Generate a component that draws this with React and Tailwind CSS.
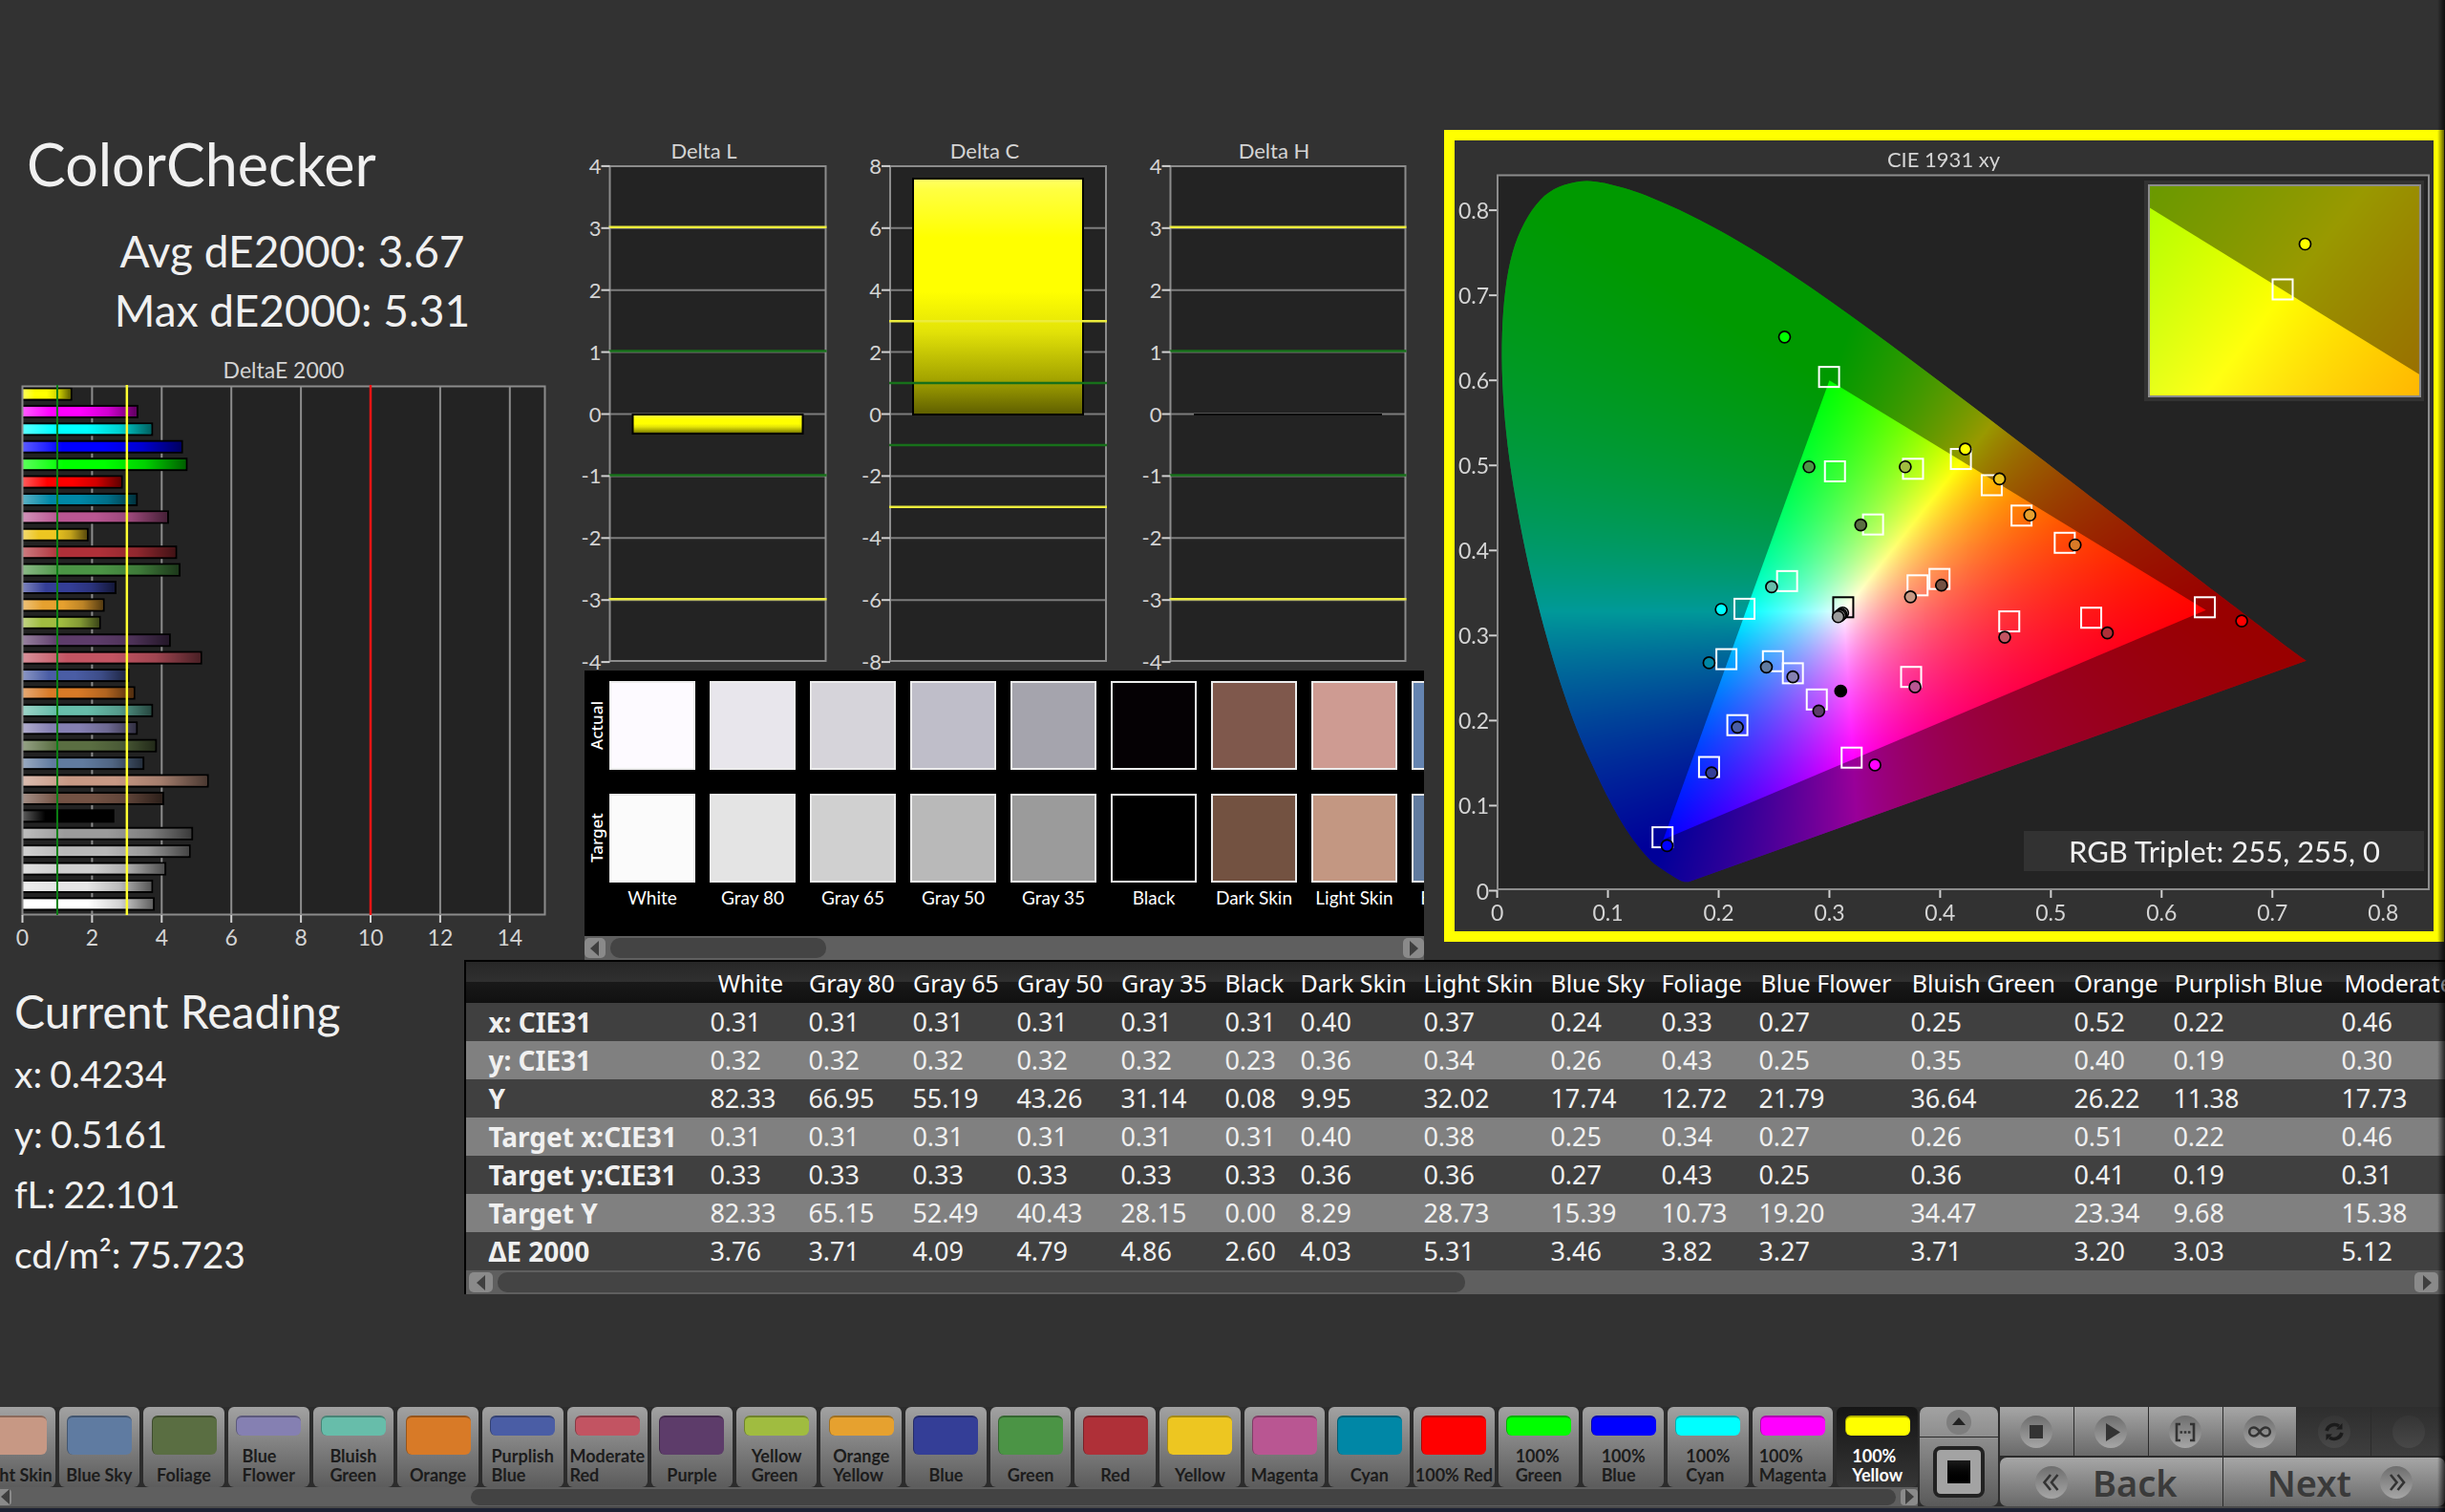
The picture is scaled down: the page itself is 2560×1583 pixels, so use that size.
import React, { useEffect, useRef } from "react";

/* ---------- data ---------- */

const DELTA_E = [
  ["#ffff00", 1.39], ["#ff00ff", 3.29], ["#00ffff", 3.71], ["#0000ff", 4.57], ["#00ff00", 4.7],
  ["#ff0000", 2.84], ["#0087a6", 3.27], ["#b95692", 4.17], ["#edc621", 1.86], ["#af3038", 4.4],
  ["#4b9445", 4.5], ["#343e97", 2.66], ["#e6a12f", 2.32], ["#a0bc40", 2.21], ["#5d3c6a", 4.22],
  ["#c25462", 5.12], ["#4a5da5", 3.03], ["#d87a27", 3.2], ["#67bdaa", 3.71], ["#8580b2", 3.27],
  ["#5a6e42", 3.82], ["#617b9f", 3.46], ["#c79884", 5.31], ["#735244", 4.03], ["#000000", 2.6],
  ["#9b9b9b", 4.86], ["#b8b8b8", 4.79], ["#cfcfcf", 4.09], ["#e5e5e5", 3.71], ["#ffffff", 3.76],
];

const SWATCHES = [
  ["White", "#fdfaff", "#fbfbfb"],
  ["Gray 80", "#e8e6ec", "#e4e4e4"],
  ["Gray 65", "#d6d4da", "#d0d0d0"],
  ["Gray 50", "#bfbec9", "#b9b9b9"],
  ["Gray 35", "#a5a4ad", "#9b9b9b"],
  ["Black", "#050104", "#000000"],
  ["Dark Skin", "#7f584c", "#735241"],
  ["Light Skin", "#ce9b92", "#c39782"],
  ["Blue Sky", "#6584b0", "#617b9f"],
];

const TARGETS = [
  [0.2997, 0.604], [0.305, 0.493], [0.3755, 0.496], [0.4187, 0.5075], [0.4466, 0.4767],
  [0.4735, 0.441], [0.5125, 0.409], [0.3394, 0.4305], [0.2618, 0.364], [0.2233, 0.3314],
  [0.3796, 0.359], [0.3994, 0.3665], [0.639, 0.3332], [0.5364, 0.3209], [0.4624, 0.3166],
  [0.207, 0.2722], [0.249, 0.2698], [0.267, 0.2556], [0.3738, 0.2513], [0.2886, 0.2248],
  [0.2169, 0.1946], [0.1913, 0.1454], [0.3201, 0.1564], [0.1493, 0.0628],
];

const READINGS = [
  [0.2595, 0.651, "#00ff00"], [0.2816, 0.4983, "#4b9445"], [0.3685, 0.4983, "#a0bc40"],
  [0.4227, 0.5192, "#ffff00"], [0.4536, 0.4841, "#edc621"], [0.481, 0.4416, "#e6a12f"],
  [0.5219, 0.4065, "#d87a27"], [0.3283, 0.4299, "#5a6e42"], [0.2478, 0.3572, "#67bdaa"],
  [0.2023, 0.3307, "#00ffff"], [0.3732, 0.3455, "#c79884"], [0.4012, 0.3591, "#735244"],
  [0.312, 0.3265, "#e5e5e5"], [0.3105, 0.325, "#cfcfcf"], [0.3095, 0.3235, "#b8b8b8"],
  [0.3079, 0.322, "#9b9b9b"], [0.6723, 0.3172, "#ff0000"], [0.551, 0.303, "#af3038"],
  [0.4583, 0.2981, "#c25462"], [0.1913, 0.2679, "#0087a6"], [0.2431, 0.263, "#617b9f"],
  [0.267, 0.2513, "#8580b2"], [0.3773, 0.2396, "#b95692"], [0.3102, 0.2347, "#000000"],
  [0.2904, 0.2113, "#5d3c6a"], [0.2169, 0.1922, "#4a5da5"], [0.1936, 0.1386, "#343e97"],
  [0.3411, 0.1478, "#ff00ff"], [0.1534, 0.053, "#0000ff"],
];

const LOCUS = [
  [0.173, 0.0105], [0.1689, 0.0105], [0.1644, 0.0125], [0.1566, 0.0187], [0.144, 0.0297], [0.1355, 0.0399],
  [0.1241, 0.0578], [0.1096, 0.0868], [0.0913, 0.1327], [0.0687, 0.2007], [0.0454, 0.295],
  [0.0235, 0.4127], [0.0082, 0.5384], [0.0045, 0.6548], [0.0139, 0.7502], [0.0389, 0.812],
  [0.0743, 0.8338], [0.1142, 0.8262], [0.1547, 0.8059], [0.1929, 0.7816], [0.2296, 0.7543],
  [0.2658, 0.7243], [0.3016, 0.6923], [0.3373, 0.6589], [0.3731, 0.6245], [0.4087, 0.5896],
  [0.4441, 0.5547], [0.4788, 0.5202], [0.5125, 0.4866], [0.5448, 0.4544], [0.5752, 0.4242],
  [0.6029, 0.3965], [0.627, 0.3725], [0.6482, 0.3514], [0.6658, 0.334], [0.6915, 0.3083],
  [0.714, 0.2859], [0.7306, 0.2704],
];

const COLUMNS = [
  ["White", "w-[103px]"], ["Gray 80", "w-[109px]"], ["Gray 65", "w-[109px]"], ["Gray 50", "w-[109px]"],
  ["Gray 35", "w-[109px]"], ["Black", "w-[79px]"], ["Dark Skin", "w-[129px]"], ["Light Skin", "w-[133px]"],
  ["Blue Sky", "w-[116px]"], ["Foliage", "w-[102px]"], ["Blue Flower", "w-[159px]"],
  ["Bluish Green", "w-[171px]"], ["Orange", "w-[104px]"], ["Purplish Blue", "w-[176px]"],
  ["Moderate Red", "w-[190px]"],
];

const ROWS = [
  ["x: CIE31", "0.31 0.31 0.31 0.31 0.31 0.31 0.40 0.37 0.24 0.33 0.27 0.25 0.52 0.22 0.46"],
  ["y: CIE31", "0.32 0.32 0.32 0.32 0.32 0.23 0.36 0.34 0.26 0.43 0.25 0.35 0.40 0.19 0.30"],
  ["Y", "82.33 66.95 55.19 43.26 31.14 0.08 9.95 32.02 17.74 12.72 21.79 36.64 26.22 11.38 17.73"],
  ["Target x:CIE31", "0.31 0.31 0.31 0.31 0.31 0.31 0.40 0.38 0.25 0.34 0.27 0.26 0.51 0.22 0.46"],
  ["Target y:CIE31", "0.33 0.33 0.33 0.33 0.33 0.33 0.36 0.36 0.27 0.43 0.25 0.36 0.41 0.19 0.31"],
  ["Target Y", "82.33 65.15 52.49 40.43 28.15 0.00 8.29 28.73 15.39 10.73 19.20 34.47 23.34 9.68 15.38"],
  ["ΔE 2000", "3.76 3.71 4.09 4.79 4.86 2.60 4.03 5.31 3.46 3.82 3.27 3.71 3.20 3.03 5.12"],
];

const PATCHES = [
  ["Light Skin", "#c79884"], ["Blue Sky", "#5f7ba1"], ["Foliage", "#5a6e42"], ["Blue\nFlower", "#8580b2"],
  ["Bluish\nGreen", "#67bdaa"], ["Orange", "#d87a27"], ["Purplish\nBlue", "#4a5da5"],
  ["Moderate\nRed", "#c25462"], ["Purple", "#5d3c6a"], ["Yellow\nGreen", "#a0bc40"],
  ["Orange\nYellow", "#e6a12f"], ["Blue", "#343e97"], ["Green", "#4b9445"], ["Red", "#af3038"],
  ["Yellow", "#edc621"], ["Magenta", "#b95692"], ["Cyan", "#0087a6"], ["100% Red", "#ff0000"],
  ["100%\nGreen", "#00ff00"], ["100%\nBlue", "#0000ff"], ["100%\nCyan", "#00ffff"],
  ["100%\nMagenta", "#ff00ff"], ["100%\nYellow", "#ffff00"],
];

/* ---------- Delta E chart ---------- */

const deX = (v) => 23.5 + v * 36.45;

function DeltaEChart() {
  return (
    <svg viewBox="0 356 612 646" className="block w-full font-['Lato',sans-serif]" role="img" aria-label="DeltaE 2000">
      <defs>
        <linearGradient id="sheenX">
          <stop offset="0" stopColor="#fff" stopOpacity="0.35" />
          <stop offset="0.25" stopColor="#fff" stopOpacity="0" />
        </linearGradient>
        <linearGradient id="shadeX">
          <stop offset="0.5" stopColor="#000" stopOpacity="0" />
          <stop offset="0.75" stopColor="#000" stopOpacity="0.18" />
          <stop offset="1" stopColor="#000" stopOpacity="0.62" />
        </linearGradient>
      </defs>
      <text x="297" y="396" textAnchor="middle" fontSize="23" fill="#d4d4d4">DeltaE 2000</text>
      <rect x="23.5" y="405" width="547" height="552" fill="#232323" />
      {[2, 4, 6, 8, 10, 12, 14].map((v) => (
        <line key={v} x1={deX(v)} x2={deX(v)} y1="405" y2="957" stroke="#8c8c8c" strokeWidth="2" />
      ))}
      {DELTA_E.map(([color, v], i) => {
        const y = 406 + i * 18.41;
        const w = v * 36.45 - 1;
        return (
          <g key={i}>
            <rect x="24" y={y - 0.5} width={w + 2} height="14" fill="#000" />
            <rect x="24" y={y + 1.5} width={w} height="10" fill={color} />
            <rect x="24" y={y + 1.5} width={w} height="10" fill="url(#shadeX)" />
            <rect x="24" y={y + 1.5} width={w} height="10" fill="url(#sheenX)" />
          </g>
        );
      })}
      <rect x="23.5" y="404.5" width="547" height="553" fill="none" stroke="#8c8c8c" strokeWidth="2" />
      <line x1={deX(1)} x2={deX(1)} y1="403" y2="958" stroke="#0c8014" strokeWidth="2" />
      <line x1={deX(3)} x2={deX(3)} y1="403" y2="958" stroke="#ffff30" strokeWidth="2.5" />
      <line x1={deX(10)} x2={deX(10)} y1="403" y2="958" stroke="#f01414" strokeWidth="2.5" />
      {[0, 2, 4, 6, 8, 10, 12, 14].map((v) => (
        <g key={v}>
          <line x1={deX(v)} x2={deX(v)} y1="958" y2="966" stroke="#d0d0d0" strokeWidth="2" />
          <text x={deX(v)} y="990" textAnchor="middle" fontSize="23" fill="#d4d4d4">{v}</text>
        </g>
      ))}
    </svg>
  );
}

/* ---------- Delta L / C / H charts ---------- */

const DELTAS = [
  { name: "Delta L", left: 638.5, width: 226, cx: 737, step: 1 },
  { name: "Delta C", left: 932, width: 226, cx: 1031, step: 2 },
  { name: "Delta H", left: 1225.5, width: 246, cx: 1334, step: 1 },
];

function DeltaCharts() {
  const y = (units) => 433.5 - units * 64.9;
  return (
    <svg viewBox="612 136 879 566" className="block w-full overflow-visible font-['Lato',sans-serif]" role="img" aria-label="Delta L, Delta C and Delta H">
      <defs>
        <linearGradient id="barY" x2="0" y2="1">
          <stop offset="0" stopColor="#ffff66" />
          <stop offset="0.05" stopColor="#ffff40" />
          <stop offset="0.25" stopColor="#ffff00" />
          <stop offset="0.48" stopColor="#ffff00" />
          <stop offset="0.65" stopColor="#e2e208" />
          <stop offset="0.85" stopColor="#a4a400" />
          <stop offset="1" stopColor="#5e5e00" />
        </linearGradient>
      </defs>
      {DELTAS.map(({ name, left, width, cx, step }) => (
        <g key={name}>
          <text x={cx} y="166" textAnchor="middle" fontSize="22" fill="#d4d4d4">{name}</text>
          <rect x={left} y="174" width={width} height="518" fill="#232323" />
          {[3, 2, 1, 0, -1, -2, -3].map((u) => (
            <line key={u} x1={left} x2={left + width} y1={y(u)} y2={y(u)} stroke="#7c7c7c" strokeWidth="2" />
          ))}
          <rect x={left} y="174" width={width} height="518" fill="none" stroke="#8c8c8c" strokeWidth="2" />
          {name === "Delta L" && (
            <rect x="662.5" y="434" width="178" height="20" fill="url(#barY)" stroke="#000" strokeWidth="2" />
          )}
          {name === "Delta C" && (
            <rect x="956" y="187" width="178" height="247" fill="url(#barY)" stroke="#000" strokeWidth="2" />
          )}
          {name === "Delta H" && <rect x="1250" y="433" width="197" height="2" fill="#0c0c0c" />}
          {[3, 1, -1, -3].map((v) => (
            <line
              key={v}
              x1={left - 1}
              x2={left + width + 1}
              y1={y(v / step) - (step === 1 ? 1 : 0)}
              y2={y(v / step) - (step === 1 ? 1 : 0)}
              stroke={Math.abs(v) === 3 ? "#ecec3c" : "#17701a"}
              strokeWidth="2.5"
            />
          ))}
          {[4, 3, 2, 1, 0, -1, -2, -3, -4].map((u) => (
            <g key={u}>
              <line x1={left - 9} x2={left} y1={y(u)} y2={y(u)} stroke="#d0d0d0" strokeWidth="2" />
              <text x={left - 9} y={y(u) + 8} textAnchor="end" fontSize="22" fill="#d4d4d4">{u * step}</text>
            </g>
          ))}
        </g>
      ))}
    </svg>
  );
}

/* ---------- CIE 1931 chart ---------- */

const VIEW = { x: 1523, y: 146, w: 1025, h: 828 };
const px = (x) => 1567.6 + x * 1159.5;
const py = (y) => 931.5 - y * 890.5;
const INSET = { x: 2250, y: 193, w: 284, h: 221 };

function chroma(x, y, out, i) {
  const X = x / y;
  const Z = (1 - x - y) / y;
  const r = 3.2406 * X - 1.5372 - 0.4986 * Z;
  const g = -0.9689 * X + 1.8758 + 0.0415 * Z;
  const b = 0.0557 * X - 0.204 + 1.057 * Z;
  const m = Math.max(r, g, b);
  const enc = (c) => 255 * Math.max(0, c / m);
  out[i] = enc(r);
  out[i + 1] = enc(g);
  out[i + 2] = enc(b);
  out[i + 3] = 255;
}

function field(w, h, fx, fy) {
  const c = document.createElement("canvas");
  c.width = w;
  c.height = h;
  const ctx = c.getContext("2d");
  const img = ctx.createImageData(w, h);
  for (let j = 0; j < h; j++)
    for (let i = 0; i < w; i++) chroma(fx(i), Math.max(0.001, fy(j)), img.data, (j * w + i) * 4);
  ctx.putImageData(img, 0, 0);
  return c;
}

function trace(ctx, pts) {
  ctx.beginPath();
  pts.forEach(([x, y], i) => (i ? ctx.lineTo(x, y) : ctx.moveTo(x, y)));
  ctx.closePath();
}

function smooth(ctx, pts) {
  ctx.beginPath();
  ctx.moveTo(pts[0][0], pts[0][1]);
  for (let i = 0; i < pts.length - 1; i++) {
    const a = pts[Math.max(0, i - 1)];
    const b = pts[i];
    const c = pts[i + 1];
    const d = pts[Math.min(pts.length - 1, i + 2)];
    ctx.bezierCurveTo(
      b[0] + (c[0] - a[0]) / 6, b[1] + (c[1] - a[1]) / 6,
      c[0] - (d[0] - b[0]) / 6, c[1] - (d[1] - b[1]) / 6,
      c[0], c[1]
    );
  }
  ctx.closePath();
}

const GAMUT = [[0.3, 0.6], [0.64, 0.33], [0.15, 0.06]];

function drawField(ctx, image, x, y, triangle) {
  ctx.drawImage(image, x, y);
  ctx.fillStyle = "rgba(0,0,0,0.4)";
  ctx.fillRect(x, y, image.width, image.height);
  ctx.save();
  trace(ctx, triangle);
  ctx.clip();
  ctx.drawImage(image, x, y);
  ctx.restore();
}

function GamutCanvas() {
  const ref = useRef(null);
  useEffect(() => {
    const ctx = ref.current.getContext("2d");
    ctx.setTransform(1, 0, 0, 1, -VIEW.x, -VIEW.y);
    ctx.fillStyle = "#232323";
    ctx.fillRect(1568, 182, 975, 748);

    const main = field(976, 748, (i) => (1568 + i - 1567.6) / 1159.5, (j) => (931.5 - 182 - j) / 890.5);
    ctx.save();
    smooth(ctx, LOCUS.map(([x, y]) => [px(x), py(y)]));
    ctx.clip();
    drawField(ctx, main, 1568, 182, GAMUT.map(([x, y]) => [px(x), py(y)]));
    ctx.restore();

    const ix = (x) => INSET.x + INSET.w / 2 + (x - 0.4193) * 5680;
    const iy = (y) => INSET.y + INSET.h / 2 - (y - 0.5053) * 4420;
    ctx.fillStyle = "#323232";
    ctx.fillRect(2245, 188, 293, 231);
    const zoomed = field(
      INSET.w, INSET.h,
      (i) => 0.4193 + (i - INSET.w / 2) / 5680,
      (j) => 0.5053 - (j - INSET.h / 2) / 4420
    );
    ctx.save();
    ctx.beginPath();
    ctx.rect(INSET.x, INSET.y, INSET.w, INSET.h);
    ctx.clip();
    drawField(ctx, zoomed, INSET.x, INSET.y, GAMUT.map(([x, y]) => [ix(x), iy(y)]));
    ctx.restore();
  }, []);
  return <canvas ref={ref} width={VIEW.w} height={VIEW.h} className="col-start-1 row-start-1 block w-full" />;
}

const Square = ({ x, y, color = "#fff" }) => (
  <rect x={x - 10.5} y={y - 10.5} width="21" height="21" fill="none" stroke={color} strokeWidth="2" />
);
const Dot = ({ x, y, color }) => <circle cx={x} cy={y} r="6" fill={color} stroke="#000" strokeWidth="1.7" />;

function CieChart() {
  return (
    <section className="mr-px grid border-[11px] border-[#ffff00]">
      <GamutCanvas />
      <svg viewBox="1523 146 1025 828" className="col-start-1 row-start-1 block w-full font-['Lato',sans-serif]" role="img" aria-label="CIE 1931 xy">
        <text x="2035" y="174" textAnchor="middle" fontSize="22" fill="#d4d4d4">CIE 1931 xy</text>
        <rect x="1568" y="182.5" width="975" height="747.5" fill="none" stroke="#8c8c8c" strokeWidth="2" />
        {[0, 1, 2, 3, 4, 5, 6, 7, 8].map((n) => (
          <g key={n} fill="#d4d4d4" fontSize="23">
            <line x1={px(n / 10)} x2={px(n / 10)} y1="931" y2="939" stroke="#d0d0d0" strokeWidth="2" />
            <text x={px(n / 10)} y="963" textAnchor="middle">{n ? `0.${n}` : 0}</text>
            <line x1="1559" x2="1567" y1={py(n / 10)} y2={py(n / 10)} stroke="#d0d0d0" strokeWidth="2" />
            <text x="1559" y={py(n / 10) + 9} textAnchor="end">{n ? `0.${n}` : 0}</text>
          </g>
        ))}
        {TARGETS.map(([x, y], i) => <Square key={i} x={px(x)} y={py(y)} />)}
        <Square x={px(0.3125)} y={py(0.3332)} color="#000" />
        {READINGS.map(([x, y, c], i) => <Dot key={i} x={px(x)} y={py(y)} color={c} />)}
        <rect x={INSET.x} y={INSET.y} width={INSET.w} height={INSET.h} fill="none" stroke="#8c8c8c" strokeWidth="2" />
        <Square x={2390} y={302} />
        <Dot x={2413.5} y={254.5} color="#ffff00" />
        <rect x="2119" y="869" width="419" height="42" fill="#323232" />
        <text x="2329" y="902" textAnchor="middle" fontSize="31" fill="#f0f0f0">RGB Triplet: 255, 255, 0</text>
      </svg>
    </section>
  );
}

/* ---------- scroll bar ---------- */

function Arrow({ left, className }) {
  return (
    <button
      type="button"
      aria-label={left ? "Scroll left" : "Scroll right"}
      className={`flex shrink-0 items-center justify-center bg-[#8a8a8a] ${className}`}
    >
      <svg viewBox="0 0 10 16" className="h-4 w-[10px]">
        <path d={left ? "M9 0V16L0 8Z" : "M1 0V16L10 8Z"} fill="#3f3f3f" />
      </svg>
    </button>
  );
}

/* ---------- swatch comparison ---------- */

function SwatchPanel() {
  return (
    <section className="relative">
      <div className="flex h-[278px] overflow-hidden bg-black pt-[11px] font-['Noto_Sans',sans-serif] text-white">
        <div className="flex w-[26px] shrink-0 flex-col items-center gap-[25px] text-[17px] leading-[26px] font-medium">
          <span className="flex h-[93px] rotate-180 items-center justify-center [writing-mode:vertical-rl]">Actual</span>
          <span className="flex h-[93px] rotate-180 items-center justify-center [writing-mode:vertical-rl]">Target</span>
        </div>
        <ul className="flex gap-[15px]">
          {SWATCHES.map(([name, actual, target]) => (
            <li key={name} className="flex w-[90px] shrink-0 flex-col">
              <div className="h-[93px] border-2 border-[#ececec]" style={{ backgroundColor: actual }} />
              <div className="mt-[25px] h-[93px] border-2 border-[#ececec]" style={{ backgroundColor: target }} />
              <span className="mt-1 text-center font-['Lato',sans-serif] text-[19px] leading-6 whitespace-nowrap">{name}</span>
            </li>
          ))}
        </ul>
      </div>
      <div className="flex h-[25px] items-center gap-[5px] bg-[#5f5f5f]">
        <Arrow left className="h-[21px] w-[22px] rounded-[5px]" />
        <div className="h-[21px] w-[226px] rounded-[10px] bg-[#444]" />
        <Arrow className="ml-auto h-[21px] w-[22px] rounded-[5px]" />
      </div>
    </section>
  );
}

/* ---------- readings ---------- */

function CurrentReading() {
  return (
    <section className="pt-6 pl-[15px] font-['Lato',sans-serif] text-[#f0f0f0]">
      <h2 className="text-[48px] leading-[60px]">Current Reading</h2>
      <dl className="mt-1 text-[39px] leading-[63px]">
        {[["x", "0.4234"], ["y", "0.5161"], ["fL", "22.101"], ["cd/m²", "75.723"]].map(([k, v]) => (
          <div key={k} className="flex gap-2">
            <dt>{k}:</dt>
            <dd>{v}</dd>
          </div>
        ))}
      </dl>
    </section>
  );
}

function ReadingTable() {
  return (
    <section className="min-w-0 border-t-2 border-l-2 border-black">
      <div className="overflow-hidden">
        <table className="w-[2153px] table-fixed border-collapse font-['Noto_Sans',sans-serif] text-[#f0f0f0]">
          <colgroup>
            <col className="w-[255px]" />
            {COLUMNS.map(([name, width]) => <col key={name} className={width} />)}
          </colgroup>
          <thead>
            <tr className="h-[43px] bg-[linear-gradient(#272727,#303030_50%,#191919_50%,#101010)]">
              <td />
              {COLUMNS.map(([name]) => (
                <th key={name} scope="col" className="p-0 text-[25px] leading-8 font-normal whitespace-nowrap text-white">
                  <div className="pr-[18px] text-center">{name}</div>
                </th>
              ))}
            </tr>
          </thead>
          <tbody>
            {ROWS.map(([label, values]) => (
              <tr key={label} className="odd:bg-[#404040] even:bg-[#808080]">
                <th scope="row" className="h-10 p-0 pl-[23px] text-left text-[28px] leading-8 font-bold">{label}</th>
                {values.split(" ").map((v, i) => (
                  <td key={i} className="p-0 text-[27px] leading-8">{v}</td>
                ))}
              </tr>
            ))}
          </tbody>
        </table>
      </div>
      <div className="flex h-[25px] items-center gap-[5px] bg-[#5f5f5f] px-[3px]">
        <Arrow left className="h-[21px] w-[25px] rounded-[5px]" />
        <div className="h-[21px] w-[49%] rounded-[10px] bg-[#444]" />
        <Arrow className="mr-1 ml-auto h-[21px] w-[25px] rounded-[5px]" />
      </div>
    </section>
  );
}

/* ---------- bottom bar ---------- */

function PatchButton({ name, color, active }) {
  const twoLines = name.includes("\n");
  return (
    <button
      type="button"
      className={`flex h-[84px] w-[4.216%] shrink-0 flex-col items-center justify-between rounded-[6px] pt-[9px] pb-[3px] font-['Lato',sans-serif] ${
        active ? "bg-linear-to-b from-[#161616] to-[#363636] text-white" : "bg-linear-to-b from-[#a2a2a2] to-[#5c5c5c] text-[#1c1c1c]"
      }`}
    >
      <span
        className={`w-[68px] shrink-0 rounded-[6px] border-t-2 border-l border-black/30 bg-clip-border ${twoLines ? "h-[21px]" : "h-[41px]"}`}
        style={{ backgroundColor: color }}
      />
      <span className="text-left text-[18px] leading-5 font-bold whitespace-pre">{name}</span>
    </button>
  );
}

function Knob({ children, dim }) {
  return (
    <svg viewBox="0 0 34 34" className="h-[34px] w-[34px]">
      <defs>
        <linearGradient id="knob" x2="0" y2="1">
          <stop offset="0" stopColor="#6e6e6e" />
          <stop offset="1" stopColor="#a6a6a6" />
        </linearGradient>
        <linearGradient id="knobDim" x2="0" y2="1">
          <stop offset="0" stopColor="#353535" />
          <stop offset="1" stopColor="#484848" />
        </linearGradient>
      </defs>
      <circle cx="17" cy="17" r="17" fill={dim ? "url(#knobDim)" : "url(#knob)"} />
      {children}
    </svg>
  );
}

const INK = "#333";

const TRANSPORT = [
  ["Stop", <path d="M10 10H24V24H10Z" fill={INK} />],
  ["Play", <path d="M12 8L27 17.500L12 27Z" fill={INK} />],
  ["Read series", (
    <g fill="none" stroke={INK} strokeWidth="2.600">
      <path d="M12 9H8V26H12M22 9H26V26H22" />
      <path d="M11.500 17.500H22.500" strokeDasharray="2.600 1.600" />
    </g>
  )],
  ["Read continuous", (
    <path
      d="M17 17C14.500 13.500 12.800 12.500 10.700 12.500A4.500 4.500 0 0 0 10.700 21.500C12.800 21.500 14.500 20.500 17 17C19.500 13.500 21.200 12.500 23.300 12.500A4.500 4.500 0 0 1 23.300 21.500C21.200 21.500 19.500 20.500 17 17Z"
      fill="none" stroke={INK} strokeWidth="2.600"
    />
  )],
  ["Refresh", (
    <g fill="none" stroke="#1b1b1b" strokeWidth="3.600">
      <path d="M9 16A8.500 8.500 0 0 1 22 11" />
      <path d="M25 18A8.500 8.500 0 0 1 12 23" />
      <path d="M19 14.500H25.500V8Z" fill="#1b1b1b" stroke="none" />
      <path d="M15 19.500H8.500V26Z" fill="#1b1b1b" stroke="none" />
    </g>
  )],
  ["Record", null],
];

function BottomBar() {
  return (
    <footer className="mt-auto">
      <div className="flex h-[104px] gap-[2px] bg-[#2c2c2c]">
        <div className="flex min-w-0 flex-1 flex-col">
          <div className="flex min-h-0 justify-end gap-1 overflow-hidden">
            {PATCHES.map(([name, color], i) => (
              <PatchButton key={name} name={name} color={color} active={i === PATCHES.length - 1} />
            ))}
          </div>
          <div className="flex h-5 items-center bg-[#5f5f5f]">
            <Arrow left className="h-[17px] w-3 rounded-r-[4px]" />
            <div className="mr-[5px] ml-auto h-[17px] w-[1492px] rounded-[9px] bg-[#434343]" />
            <Arrow className="h-[17px] w-[18px] rounded-[4px]" />
          </div>
        </div>

        <div className="flex w-[82px] flex-col">
          <button type="button" aria-label="Expand" className="flex h-[31px] items-center justify-center rounded-t-[7px] bg-linear-to-b from-[#a2a2a2] to-[#8e8e8e]">
            <svg viewBox="0 0 26 26" className="h-[26px] w-[26px]">
              <circle cx="13" cy="13" r="13" fill="#7e7e7e" />
              <path d="M13 8L20 16H6Z" fill="#222" />
            </svg>
          </button>
          <button type="button" aria-label="Pattern window" className="mt-px flex flex-1 items-center justify-center rounded-b-[7px] bg-linear-to-b from-[#8e8e8e] to-[#5a5a5a]">
            <span className="flex h-[54px] w-[54px] items-center justify-center rounded-[8px] border-4 border-[#222] bg-[#a3a3a3]">
              <span className="h-6 w-6 bg-linear-to-b from-[#1c1c1c] to-black" />
            </span>
          </button>
        </div>

        <div className="flex w-[466px] flex-col gap-[2px]">
          <div className="grid h-[51px] grid-cols-6 gap-px">
            {TRANSPORT.map(([label, icon], i) => (
              <button
                key={label}
                type="button"
                aria-label={label}
                className={`flex items-center justify-center ${
                  i > 3 ? "bg-linear-to-b from-[#2e2e2e] to-[#3e3e3e]" : "bg-linear-to-b from-[#a6a6a6] to-[#6a6a6a]"
                }`}
              >
                <Knob dim={i > 3}>{icon}</Knob>
              </button>
            ))}
          </div>
          <div className="grid flex-1 grid-cols-2 gap-px font-['Noto_Sans',sans-serif] text-[38px] leading-[48px] font-semibold text-[#3a3a3a]">
            <button type="button" className="flex items-center gap-[26px] rounded-l-[7px] bg-linear-to-b from-[#a6a6a6] to-[#6a6a6a] pl-[37px]">
              <Knob><path d="M16 9L9.500 17L16 25M23.500 9L17 17L23.500 25" fill="none" stroke={INK} strokeWidth="2.600" /></Knob>
              Back
            </button>
            <button type="button" className="flex items-center justify-end gap-[30px] rounded-r-[7px] bg-linear-to-b from-[#a6a6a6] to-[#6a6a6a] pr-[34px]">
              Next
              <Knob><path d="M11 9L17.500 17L11 25M18.500 9L25 17L18.500 25" fill="none" stroke={INK} strokeWidth="2.600" /></Knob>
            </button>
          </div>
        </div>
      </div>
      <div className="h-[6px] border-t-2 border-[#4a4a4a] bg-[#1d2233]" />
    </footer>
  );
}

export default function App() {
  return (
    <div className="relative flex min-h-screen flex-col overflow-hidden bg-[#323232]">
      <main>
        <div className="grid grid-cols-[minmax(0,612fr)_minmax(0,900fr)_minmax(0,1048fr)] items-start pt-[136px]">
          <section>
            <h1 className="pl-7 font-['Lato',sans-serif] text-[61px] leading-[72px] text-[#f0f0f0]">ColorChecker</h1>
            <div className="mt-6 text-center font-['Lato',sans-serif] text-[46px] leading-[62px] text-[#f0f0f0]">
              <p>Avg dE2000: 3.67</p>
              <p>Max dE2000: 5.31</p>
            </div>
            <DeltaEChart />
          </section>
          <div className="pr-[21px]">
            <DeltaCharts />
            <SwatchPanel />
          </div>
          <CieChart />
        </div>
        <div className="grid grid-cols-[19%_minmax(0,1fr)]">
          <CurrentReading />
          <ReadingTable />
        </div>
      </main>
      <BottomBar />
      <div className="pointer-events-none absolute inset-y-0 right-0 w-2 bg-linear-to-r from-transparent to-black/70" />
    </div>
  );
}
